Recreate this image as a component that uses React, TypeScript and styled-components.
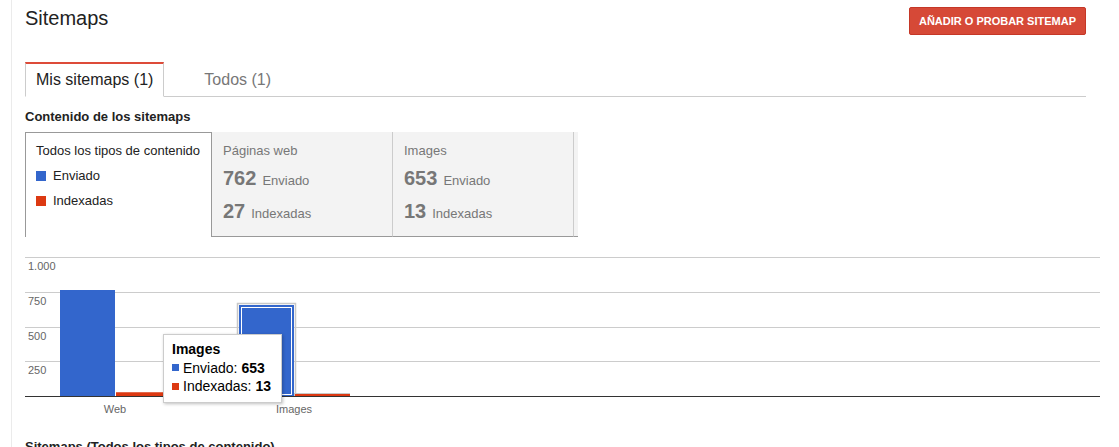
import styled, { createGlobalStyle } from "styled-components";

const GlobalStyle = createGlobalStyle`
  html, body {
    margin: 0;
    padding: 0;
    background: #fff;
    font-family: "Liberation Sans", Arial, sans-serif;
    color: #222;
    overflow: hidden;
  }
`;

const Page = styled.div`
  padding-left: 11px;
  height: 447px;
`;

const Main = styled.main`
  border-left: 1px solid #ebebeb;
  padding-left: 13px;
  width: 1075px;
  height: 100%;
`;

const Header = styled.header`
  display: flex;
  justify-content: space-between;
  align-items: flex-start;
  margin-right: 14px;
`;

const Title = styled.h1`
  margin: 0;
  padding-top: 6px;
  font-size: 20px;
  line-height: 24px;
  font-weight: normal;
  color: #222;
`;

const AddButton = styled.button`
  margin-top: 7px;
  height: 28px;
  padding: 0 9px;
  border: 1px solid #c53727;
  border-radius: 2px;
  background: #d64937;
  color: #fff;
  font-family: "Liberation Sans", Arial, sans-serif;
  font-size: 11px;
  font-weight: bold;
  cursor: pointer;
  white-space: nowrap;
`;

const TabBar = styled.div`
  display: flex;
  margin-top: 27px;
  margin-right: 14px;
  border-bottom: 1px solid #ccc;
`;

const Tab = styled.div<{ $active?: boolean }>`
  height: 32px;
  line-height: 32px;
  padding: 0 10px;
  font-size: 16px;
  margin-bottom: ${(p) => (p.$active ? -1 : 0)}px;
  color: ${(p) => (p.$active ? "#222" : "#777")};
  background: ${(p) => (p.$active ? "#fff" : "transparent")};
  border-top: 2px solid ${(p) => (p.$active ? "#dd4b39" : "transparent")};
  border-left: 1px solid ${(p) => (p.$active ? "#ccc" : "transparent")};
  border-right: 1px solid ${(p) => (p.$active ? "#ccc" : "transparent")};
  border-bottom: ${(p) => (p.$active ? "1px solid #fff" : "none")};
  & + & {
    margin-left: 29px;
  }
`;

const SectionTitle = styled.h2`
  margin: 12px 0 0;
  font-size: 13px;
  line-height: 16px;
  font-weight: bold;
  color: #222;
`;

const Summary = styled.div`
  display: flex;
  height: 105px;
  margin-top: 7px;
`;

const AllTypes = styled.div`
  width: 175px;
  padding: 10px 0 0 10px;
  border: 1px solid #999;
  border-bottom: none;
  background: #fff;
  font-size: 13px;
  line-height: 16px;
  color: #222;
`;

const LegendRow = styled.div`
  display: flex;
  align-items: center;
  margin-top: 9px;
`;

const Swatch = styled.span<{ $color: string; $size?: number }>`
  display: inline-block;
  width: ${(p) => p.$size ?? 10}px;
  height: ${(p) => p.$size ?? 10}px;
  background: ${(p) => p.$color};
  margin-right: ${(p) => (p.$size ? 4 : 7)}px;
`;

const TypePanel = styled.div`
  width: 169px;
  padding: 11px 0 0 11px;
  background: #f3f3f3;
  border-right: 1px solid #ccc;
  border-bottom: 1px solid #999;
  color: #777;
  font-size: 13px;
  line-height: 16px;
`;

const PanelEnd = styled.div`
  width: 4px;
  background: #f3f3f3;
  border-bottom: 1px solid #999;
`;

const Stat = styled.div<{ $first?: boolean }>`
  display: flex;
  align-items: baseline;
  margin-top: ${(p) => (p.$first ? 7 : 6)}px;
  line-height: 24px;
`;

const StatValue = styled.span`
  font-size: 20px;
  font-weight: bold;
  margin-right: 6px;
`;

const ChartWrap = styled.div`
  position: relative;
  margin-top: 13px;
  height: 170px;
`;

const Tooltip = styled.div`
  position: absolute;
  left: 138px;
  top: 84px;
  width: 101px;
  padding: 5px 8px 6px 8px;
  background: #fff;
  border: 1px solid #ccc;
  box-shadow: 1px 1px 3px rgba(0, 0, 0, 0.25);
  font-size: 14px;
  line-height: 18.5px;
  color: #000;
`;

const TipTitle = styled.div`
  font-weight: bold;
`;

const TipRow = styled.div`
  display: flex;
  align-items: center;
  white-space: nowrap;
  b {
    margin-left: 4px;
  }
`;

const BottomTitle = styled(SectionTitle)`
  margin-top: 19px;
`;

const BLUE = "#3366cc";
const RED = "#dc3912";

const data = [
  { label: "Web", sent: 762, indexed: 27, x: 35 },
  { label: "Images", sent: 653, indexed: 13, x: 214, hover: true },
];

const panels = [
  { name: "Páginas web", sent: 762, indexed: 27 },
  { name: "Images", sent: 653, indexed: 13 },
];

const BASE = 146;
const SCALE = 139 / 1000;
const BAR = 55;

function Chart() {
  const grid = [1000, 750, 500, 250];
  return (
    <svg width={1075} height={170} style={{ display: "block" }}>
      {grid.map((v) => {
        const y = Math.round(BASE - v * SCALE) + 0.5;
        return (
          <g key={v}>
            <line x1={0} x2={1075} y1={y} y2={y} stroke="#ccc" />
            <text x={3} y={y + 12} fontSize={11} fill="#666" fontFamily="Liberation Sans, Arial, sans-serif">
              {v === 1000 ? "1.000" : v}
            </text>
          </g>
        );
      })}
      {data.map((d) => {
        const hs = Math.round(d.sent * SCALE);
        const hi = Math.max(d.indexed * SCALE, 2);
        return (
          <g key={d.label}>
            {d.hover && (
              <>
                <rect x={d.x - 1.5} y={BASE - hs - 1.5} width={BAR + 3} height={hs + 1.5} fill="none" stroke="#c8c8c8" strokeWidth={1.5} />
                <rect x={d.x + BAR + 0.5} y={BASE - hi - 0.5} width={BAR} height={hi + 0.5} fill="none" stroke="#c8c8c8" strokeWidth={1} />
              </>
            )}
            <rect x={d.x} y={BASE - hs} width={BAR} height={hs} fill={BLUE} />
            {d.hover && (
              <rect x={d.x + 2.5} y={BASE - hs + 2.5} width={BAR - 5} height={hs - 4} fill="none" stroke="#fff" strokeWidth={1} />
            )}
            <rect x={d.x + BAR + 1} y={BASE - hi} width={BAR} height={hi} fill={RED} />
            <text
              x={d.x + BAR}
              y={163}
              fontSize={11}
              fill="#666"
              textAnchor="middle"
              fontFamily="Liberation Sans, Arial, sans-serif"
            >
              {d.label}
            </text>
          </g>
        );
      })}
      <line x1={0} x2={1075} y1={BASE + 0.5} y2={BASE + 0.5} stroke="#333" />
    </svg>
  );
}

export default function App() {
  return (
    <>
      <GlobalStyle />
      <Page>
        <Main>
          <Header>
            <Title>Sitemaps</Title>
            <AddButton>AÑADIR O PROBAR SITEMAP</AddButton>
          </Header>
          <TabBar>
            <Tab $active>Mis sitemaps (1)</Tab>
            <Tab>Todos (1)</Tab>
          </TabBar>
          <SectionTitle>Contenido de los sitemaps</SectionTitle>
          <Summary>
            <AllTypes>
              Todos los tipos de contenido
              <LegendRow>
                <Swatch $color={BLUE} />
                Enviado
              </LegendRow>
              <LegendRow>
                <Swatch $color={RED} />
                Indexadas
              </LegendRow>
            </AllTypes>
            {panels.map((p) => (
              <TypePanel key={p.name}>
                {p.name}
                <Stat $first>
                  <StatValue>{p.sent}</StatValue>
                  Enviado
                </Stat>
                <Stat>
                  <StatValue>{p.indexed}</StatValue>
                  Indexadas
                </Stat>
              </TypePanel>
            ))}
            <PanelEnd />
          </Summary>
          <ChartWrap>
            <Chart />
            <Tooltip>
              <TipTitle>Images</TipTitle>
              <TipRow>
                <Swatch $color={BLUE} $size={7} />
                Enviado: <b>653</b>
              </TipRow>
              <TipRow>
                <Swatch $color={RED} $size={7} />
                Indexadas: <b>13</b>
              </TipRow>
            </Tooltip>
          </ChartWrap>
          <BottomTitle>Sitemaps (Todos los tipos de contenido)</BottomTitle>
        </Main>
      </Page>
    </>
  );
}
